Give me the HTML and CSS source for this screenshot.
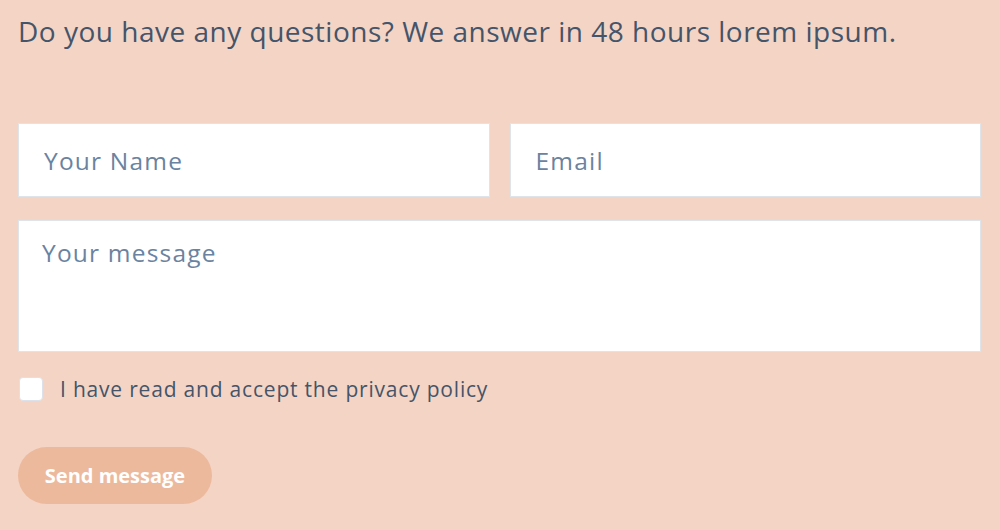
FILE: index.html
```html
<!DOCTYPE html>
<html lang="en">
<head>
    <meta charset="UTF-8">
    <title>Contact</title>
    <link rel="stylesheet" href="styles.css">
</head>
<body>
<h2 class="intro">Do you have any questions? We answer in 48 hours lorem ipsum.</h2>
<form class="contact-form">
    <div class="row">
        <input type="text" class="field" placeholder="Your Name">
        <input type="text" class="field" placeholder="Email">
    </div>
    <textarea class="field message" placeholder="Your message"></textarea>
    <label class="privacy">
        <input type="checkbox" class="check">
        <span class="box"></span>
        I have read and accept the privacy policy
    </label>
    <button type="submit" class="send">Send message</button>
</form>
</body>
</html>
```

FILE: styles.css
```css
body {
    margin: 0;
    padding: 0 19px 0 18px;
    background-color: #f4d4c4;
    font-family: "Open Sans", sans-serif;
    color: #44546a;
}

.intro {
    margin: 13px 0 0;
    font-family: "Open Sans", sans-serif;
    font-weight: 400;
    font-size: 28px;
    line-height: 36px;
    color: #44546a;
    letter-spacing: 0.5px;
}

.contact-form {
    margin-top: 74px;
    display: flex;
    flex-direction: column;
}

.row {
    display: flex;
    gap: 20px;
}

.field {
    flex: 1;
    min-width: 0;
    height: 74px;
    box-sizing: border-box;
    border: 1px solid #dfe3ea;
    background: #fff;
    padding: 0 25px;
    font-family: "Open Sans", sans-serif;
    font-size: 24.5px;
    letter-spacing: 1.2px;
    color: #44546a;
    outline: none;
}

.field::placeholder {
    color: #6a83a0;
}

.message {
    flex: none;
    margin-top: 23px;
    height: 132px;
    padding: 16px 23px;
    resize: none;
    line-height: 32px;
}

.privacy {
    margin-top: 25px;
    display: flex;
    align-items: center;
    gap: 17px;
    font-size: 21px;
    letter-spacing: 0.8px;
    color: #44546a;
    height: 24px;
}

.check {
    display: none;
}

.box {
    width: 22px;
    height: 22px;
    margin-left: 1px;
    border: 1px solid #dde2ea;
    border-radius: 4px;
    background: #fff;
}

.send {
    margin-top: 46px;
    align-self: flex-start;
    width: 194px;
    height: 57px;
    border: none;
    border-radius: 29px;
    background-color: #edb99d;
    color: #fff;
    font-family: "Open Sans", sans-serif;
    font-weight: 700;
    font-size: 20px;
    letter-spacing: 0;
    cursor: pointer;
}
```
